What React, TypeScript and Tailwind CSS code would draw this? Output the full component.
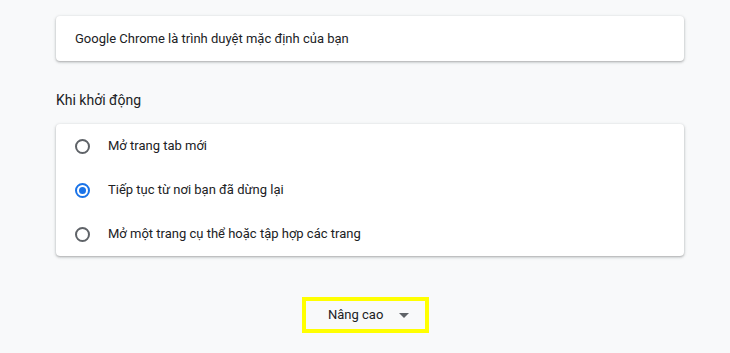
export default function App() {
  const options = [
    { label: "Mở trang tab mới", checked: false },
    { label: "Tiếp tục từ nơi bạn đã dừng lại", checked: true },
    { label: "Mở một trang cụ thể hoặc tập hợp các trang", checked: false },
  ];

  return (
    <div
      className="w-[730px] h-[353px] bg-[#f8f9fa] text-[13px] text-[#202124] overflow-hidden"
      style={{ fontFamily: "Roboto, 'Liberation Sans', sans-serif" }}
    >
      <div className="ml-[56px] w-[628px] pt-[16px]">
        {/* default browser card */}
        <div className="h-[45px] bg-white rounded-[4px] shadow-[0_1px_2px_rgba(60,64,67,0.3),0_1px_3px_1px_rgba(60,64,67,0.12)] flex items-center pl-[19px]">
          Google Chrome là trình duyệt mặc định của bạn
        </div>

        {/* on startup */}
        <div className="mt-[30px] h-[18px] flex items-center text-[14px] text-[#202124]">
          Khi khởi động
        </div>

        <div className="mt-[15px] bg-white rounded-[4px] shadow-[0_1px_2px_rgba(60,64,67,0.3),0_1px_3px_1px_rgba(60,64,67,0.12)]">
          {options.map((o) => (
            <div key={o.label} className="h-[44px] flex items-center pl-[19px]">
              {o.checked ? (
                <span className="w-[15px] h-[15px] rounded-full border-2 border-[#1a73e8] flex items-center justify-center">
                  <span className="w-[7px] h-[7px] rounded-full bg-[#1a73e8]" />
                </span>
              ) : (
                <span className="w-[15px] h-[15px] rounded-full border-2 border-[#5f6368]" />
              )}
              <span className="ml-[18px]">{o.label}</span>
            </div>
          ))}
        </div>

        {/* advanced */}
        <div className="mt-[41px] flex">
          <div className="ml-[246px] w-[127px] h-[36px] border-[4px] border-[#ffff00] flex items-center pl-[22px]">
            <span>Nâng cao</span>
            <svg className="ml-[16px]" width="10" height="5" viewBox="0 0 10 5">
              <path d="M0 0 L10 0 L5 5 Z" fill="#5f6368" />
            </svg>
          </div>
        </div>
      </div>
    </div>
  );
}
